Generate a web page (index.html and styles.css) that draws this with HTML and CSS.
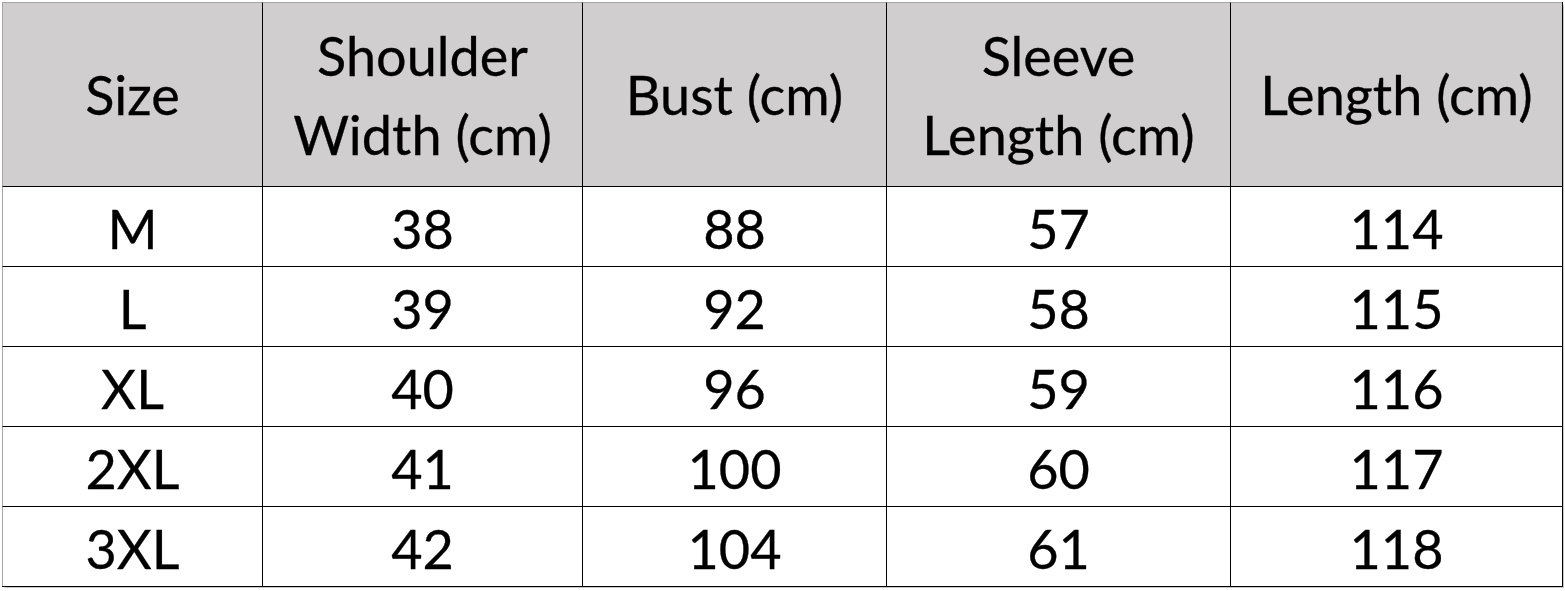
FILE: index.html
```html
<!DOCTYPE html>
<html>
<head>
<meta charset="utf-8">
<link rel="stylesheet" href="styles.css">
</head>
<body>
<div class="sheet">
  <div class="grid">
    <div class="cell head first">Size</div>
    <div class="cell head">Shoulder<br>Width (cm)</div>
    <div class="cell head">Bust (cm)</div>
    <div class="cell head">Sleeve<br>Length (cm)</div>
    <div class="cell head">Length (cm)</div>

    <div class="cell first">M</div><div class="cell">38</div><div class="cell">88</div><div class="cell">57</div><div class="cell">114</div>
    <div class="cell first">L</div><div class="cell">39</div><div class="cell">92</div><div class="cell">58</div><div class="cell">115</div>
    <div class="cell first">XL</div><div class="cell">40</div><div class="cell">96</div><div class="cell">59</div><div class="cell">116</div>
    <div class="cell first">2XL</div><div class="cell">41</div><div class="cell">100</div><div class="cell">60</div><div class="cell">117</div>
    <div class="cell first">3XL</div><div class="cell">42</div><div class="cell">104</div><div class="cell">61</div><div class="cell">118</div>
  </div>
</div>
</body>
</html>
```

FILE: styles.css
```css
html, body {
  margin: 0;
  padding: 0;
  background: #ffffff;
}
.sheet {
  padding: 2px 0 0 2px;
  width: 1565px;
  height: 591px;
  box-sizing: border-box;
  overflow: hidden;
  font-family: Lato, "Liberation Sans", sans-serif;
  color: #000;
}
.grid {
  display: grid;
  grid-template-columns: 260px 320px 304px 344px 332px;
  grid-template-rows: 184px 80px 80px 80px 80px 80px;
  width: max-content;
  border-right: 1px solid #000;
  border-bottom: 1px solid #000;
  box-shadow: 2px 2px 0 -1px #c8c8c8;
}
.cell {
  box-sizing: border-box;
  border-left: 1px solid #000;
  border-top: 1px solid #000;
  display: flex;
  align-items: center;
  justify-content: center;
  text-align: center;
  font-size: 54px;
  line-height: 79px;
  padding-top: 4px;
  -webkit-text-stroke: 0.3px #000;
}
.head {
  background: #d0cece;
  border-top-color: #a6a6a6;
  padding-top: 0;
}
.first {
  border-left-color: #a6a6a6;
}
.grid > .cell:nth-child(-n+5) {
  border-top-color: #a6a6a6;
}
```
